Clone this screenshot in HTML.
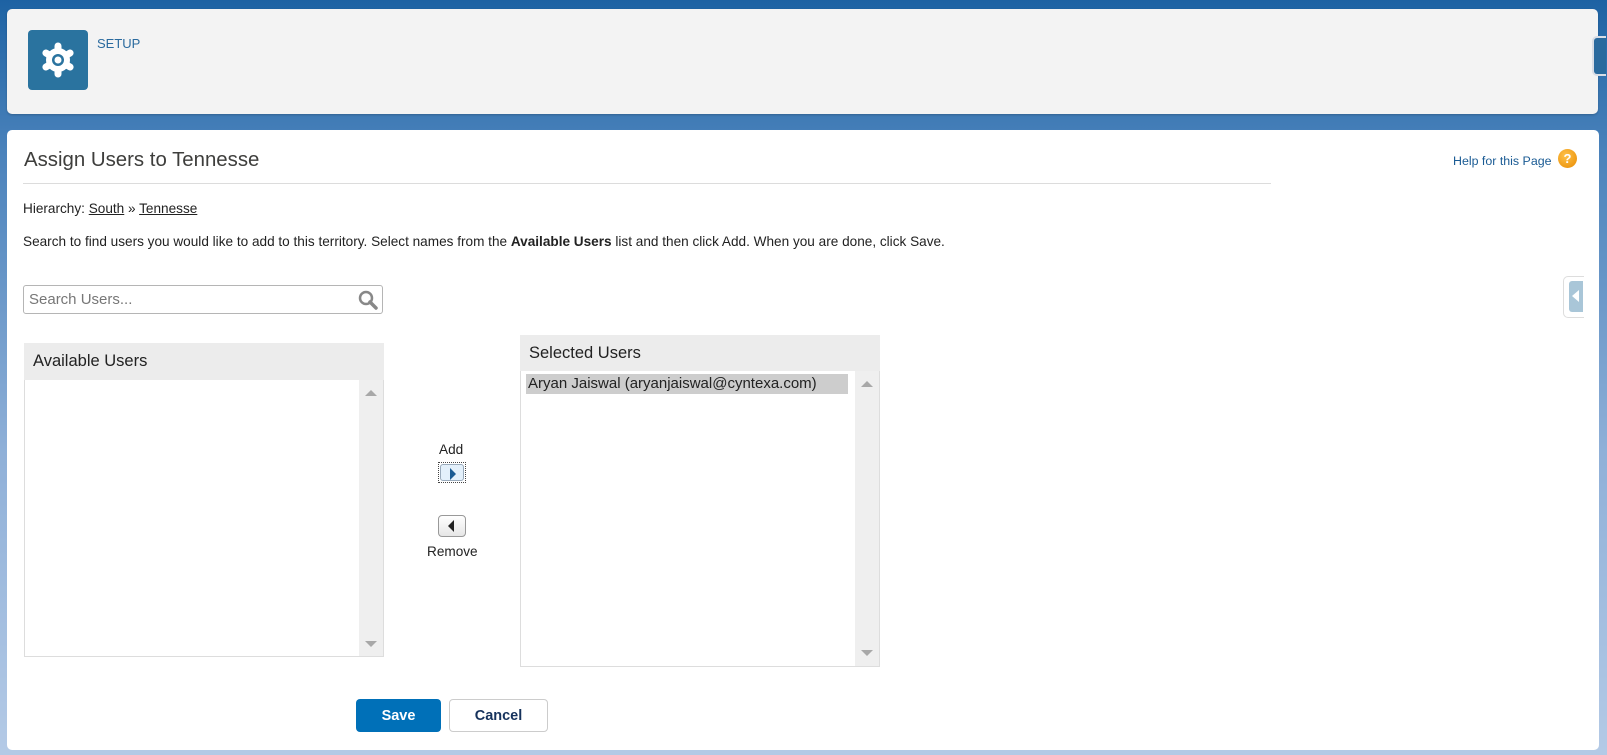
<!DOCTYPE html>
<html><head><style>
body{margin:0;width:1607px;height:755px;overflow:hidden;font-family:"Liberation Sans",Arial,sans-serif;background:linear-gradient(180deg,#1d62a3 0%,#4a82bb 20%,#8fb0d8 60%,#b4cae6 100%);position:relative}
.abs{position:absolute}
.hdr{left:7px;top:9px;width:1591px;height:105px;background:#f3f3f3;border-radius:5px;box-shadow:0 1px 2px rgba(0,0,0,.2)}
.icon{left:28px;top:30px;width:60px;height:60px;background:#2a739f;border-radius:4px}
.main{left:7px;top:130px;width:1592px;height:620px;background:#fff;border-radius:5px}
.t{font-size:13.6px;color:#222}
a{color:#222}
.box{background:#fff;border:1px solid #ddd}
.bh{background:#ececec;font-size:16.5px;color:#222;padding-left:9px;box-sizing:border-box}
.sb{background:#efefef}
.tri-up{width:0;height:0;border-left:6px solid transparent;border-right:6px solid transparent;border-bottom:6px solid #a8a8a8}
.tri-dn{width:0;height:0;border-left:6px solid transparent;border-right:6px solid transparent;border-top:6px solid #a8a8a8}
.btn{border-radius:4px;font-size:14.5px;font-weight:bold;text-align:center;line-height:34px;box-sizing:border-box}
</style></head><body>
<div class="abs hdr"></div>
<div class="abs icon"><svg width="60" height="60" viewBox="0 0 60 60"><g fill="#fff"><circle cx="30" cy="30" r="12"/><g stroke="#fff" stroke-width="7" stroke-linecap="round"><line x1="30" y1="16" x2="30" y2="44"/><line x1="17.9" y1="23" x2="42.1" y2="37"/><line x1="17.9" y1="37" x2="42.1" y2="23"/></g></g><circle cx="30" cy="30" r="6" fill="#2a739f"/><circle cx="30" cy="30" r="3.5" fill="#fff"/></svg></div>
<div class="abs" style="left:97px;top:36px;font-size:13px;color:#2a6a9e">SETUP</div>
<div class="abs" style="left:1592px;top:36px;width:12px;height:36px;border:2px solid #d8dde6;border-right:none;border-radius:5px 0 0 5px;background:#2a6a9e"></div>
<div class="abs main"></div>
<div class="abs" style="left:24px;top:149px;font-size:20.4px;color:#3e3e3c">Assign Users to Tennesse</div>
<div class="abs" style="left:23px;top:183px;width:1248px;height:1px;background:#dcdcdc"></div>
<div class="abs" style="left:1453px;top:154px;font-size:12.4px;color:#1a5b94">Help for this Page</div>
<div class="abs" style="left:1558px;top:149px;width:19px;height:19px;border-radius:50%;background:radial-gradient(circle at 40% 35%,#ffc24a,#e88a00);color:#fff;font-size:13px;font-weight:bold;text-align:center;line-height:19px">?</div>
<div class="abs t" style="left:23px;top:201px">Hierarchy: <a style="text-decoration:underline">South</a> » <a style="text-decoration:underline">Tennesse</a></div>
<div class="abs t" style="left:23px;top:234px">Search to find users you would like to add to this territory. Select names from the <b>Available Users</b> list and then click Add. When you are done, click Save.</div>
<div class="abs" style="left:23px;top:285px;width:360px;height:29px;border:1px solid #b5b5b5;border-radius:3px;box-sizing:border-box;background:#fff"></div>
<div class="abs" style="left:29px;top:291px;font-size:15px;color:#777">Search Users...</div>
<svg class="abs" style="left:357px;top:289px" width="22" height="22" viewBox="0 0 22 22"><circle cx="9" cy="9" r="6" fill="none" stroke="#888" stroke-width="2.5"/><path d="M13 13l6 6" stroke="#888" stroke-width="3.5" stroke-linecap="round"/></svg>
<div class="abs box" style="left:24px;top:343px;width:360px;height:314px;box-sizing:border-box"></div>
<div class="abs bh" style="left:24px;top:343px;width:360px;height:37px;line-height:37px">Available Users</div>
<div class="abs sb" style="left:359px;top:380px;width:24px;height:276px"></div>
<div class="abs tri-up" style="left:365px;top:390px"></div>
<div class="abs tri-dn" style="left:365px;top:641px"></div>
<div class="abs t" style="left:439px;top:442px">Add</div>
<div class="abs" style="left:438px;top:462px;width:28px;height:21px;border:1px dotted #444;box-sizing:border-box;padding:1px"><div style="width:100%;height:100%;background:#e3f0fb;border:1px solid #9ab;border-radius:3px;box-sizing:border-box;position:relative"><div style="position:absolute;left:9px;top:3px;border-top:6px solid transparent;border-bottom:6px solid transparent;border-left:6px solid #1a5b94"></div></div></div>
<div class="abs" style="left:438px;top:515px;width:28px;height:22px;border:1px solid #999;border-radius:4px;box-sizing:border-box;background:linear-gradient(#fff,#e6e6e6)"><div style="position:absolute;left:9px;top:4px;border-top:6px solid transparent;border-bottom:6px solid transparent;border-right:6px solid #222"></div></div>
<div class="abs t" style="left:427px;top:544px">Remove</div>
<div class="abs box" style="left:520px;top:335px;width:360px;height:332px;box-sizing:border-box"></div>
<div class="abs bh" style="left:520px;top:335px;width:360px;height:36px;line-height:36px">Selected Users</div>
<div class="abs sb" style="left:855px;top:371px;width:24px;height:295px"></div>
<div class="abs tri-up" style="left:861px;top:381px"></div>
<div class="abs tri-dn" style="left:861px;top:650px"></div>
<div class="abs" style="left:526px;top:374px;width:322px;height:20px;background:#cdcdcd;font-size:15px;color:#222;line-height:20px;padding-left:2px;box-sizing:border-box;white-space:nowrap">Aryan Jaiswal (aryanjaiswal@cyntexa.com)</div>
<div class="abs btn" style="left:356px;top:699px;width:85px;height:33px;background:#0070b8;color:#fff">Save</div>
<div class="abs btn" style="left:449px;top:699px;width:99px;height:33px;background:#fff;border:1px solid #ccc;color:#16325c;line-height:32px">Cancel</div>
<div class="abs" style="left:1563px;top:276px;width:20px;height:40px;background:#fff;border:1px solid #ddd;border-right:none;border-radius:5px 0 0 5px"></div>
<div class="abs" style="left:1569px;top:281px;width:14px;height:31px;background:#a9c6d8;border-radius:3px 0 0 3px"><div style="position:absolute;left:3px;top:9px;border-top:6px solid transparent;border-bottom:6px solid transparent;border-right:7px solid #fff"></div></div>
</body></html>
